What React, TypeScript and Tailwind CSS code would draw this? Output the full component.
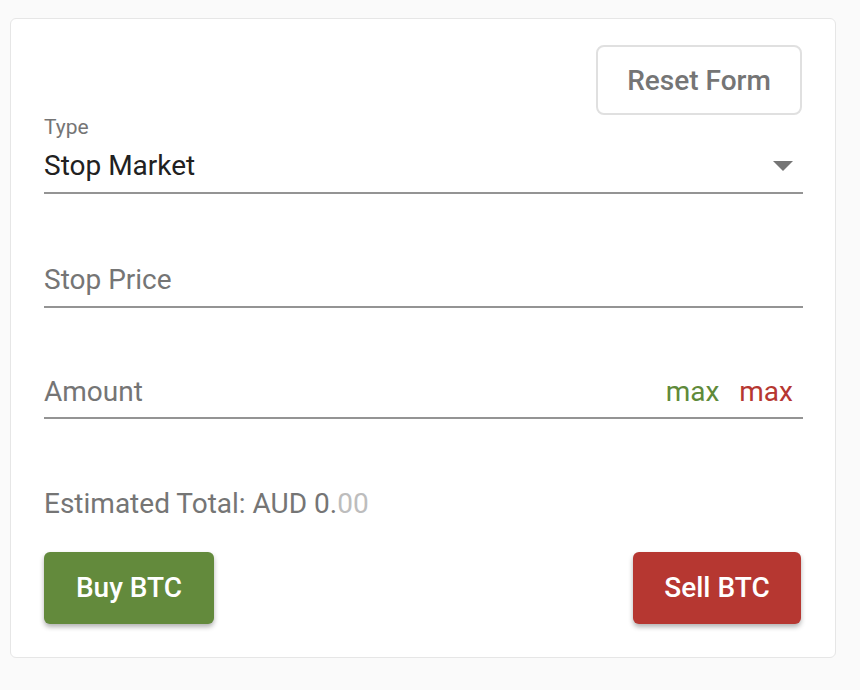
import React from "react";

export default function App() {
  return (
    <div
      className="min-h-screen w-full bg-[#fafafa] pt-[18px] pl-[10px]"
      style={{ fontFamily: "Roboto, 'Liberation Sans', sans-serif" }}
    >
      <div className="w-[826px] h-[640px] rounded-[6px] border border-[#e6e6e6] bg-white pt-[26px] pl-[33px] pr-[32px] flex flex-col">
        <div className="flex justify-end">
          <button className="h-[70px] w-[206px] mr-[1px] rounded-[8px] border-2 border-[#e0e0e0] text-[28px] font-medium text-[#757575] leading-none pt-[2px]">
            Reset Form
          </button>
        </div>

        <div className="flex flex-col">
          <div className="text-[21px] leading-[24px] text-[#757575] h-[24px]">Type</div>
          <div className="mt-[11px] flex items-center justify-between border-b-2 border-[#949494] pb-[10px]">
            <span className="text-[28px] leading-[32px] text-[#212121]">Stop Market</span>
            <svg width="20" height="10" viewBox="0 0 20 10" className="mr-[10px]">
              <polygon points="0,0 20,0 10,10" fill="#757575" />
            </svg>
          </div>
        </div>

        <div className="mt-[70px] border-b-2 border-[#949494] pb-[10px]">
          <span className="text-[28px] leading-[32px] text-[#757575]">Stop Price</span>
        </div>

        <div className="mt-[68px] flex items-center justify-between border-b-2 border-[#949494] pb-[9px]">
          <span className="text-[28px] leading-[32px] text-[#757575]">Amount</span>
          <div className="flex gap-[20px] text-[28px] leading-[32px] pr-[10px]">
            <span className="text-[#5f8a3a]">max</span>
            <span className="text-[#b63731]">max</span>
          </div>
        </div>

        <div className="mt-[69px] text-[28px] leading-[32px] text-[#757575]">
          Estimated Total: AUD 0.<span className="text-[#bdbdbd]">00</span>
        </div>

        <div className="mt-[32px] flex justify-between">
          <button className="h-[72px] w-[170px] rounded-[6px] bg-[#638a3c] text-white text-[28px] font-medium shadow-[0_3px_5px_rgba(0,0,0,0.3)]">
            Buy BTC
          </button>
          <button className="h-[72px] w-[168px] mr-[2px] rounded-[6px] bg-[#b63731] text-white text-[28px] font-medium shadow-[0_3px_5px_rgba(0,0,0,0.3)]">
            Sell BTC
          </button>
        </div>
      </div>
    </div>
  );
}
